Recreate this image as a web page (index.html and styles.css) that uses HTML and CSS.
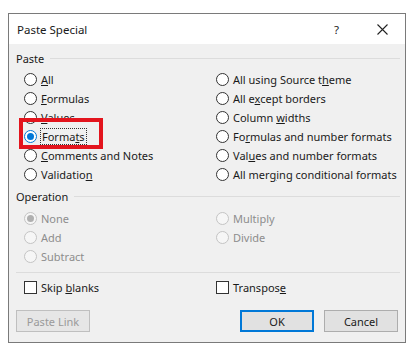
FILE: index.html
```html
<!DOCTYPE html>
<html>
    <head>
        <meta charset="UTF-8">
        <title>Paste Special</title>
        <link rel="stylesheet" href="styles.css">
    </head>
    <body>
        <div class="dialog">
            <!--title bar-->
            <div class="titlebar">
                <span class="title">Paste Special</span>
                <span class="help">?</span>
                <span class="close">
                    <svg width="11" height="11" viewBox="0 0 11 11"><path d="M0.5 0.5 L10.5 10.5 M10.5 0.5 L0.5 10.5" stroke="#222" stroke-width="1.1" fill="none"/></svg>
                </span>
            </div>
            <div class="body">
                <!--paste-->
                <div class="group">
                    <span>Paste</span><div class="rule"></div>
                </div>
                <div class="options">
                    <label class="opt"><span class="radio"></span><span><u>A</u>ll</span></label>
                    <label class="opt"><span class="radio"></span><span>All using Source t<u>h</u>eme</span></label>
                    <label class="opt"><span class="radio"></span><span><u>F</u>ormulas</span></label>
                    <label class="opt"><span class="radio"></span><span>All e<u>x</u>cept borders</span></label>
                    <label class="opt"><span class="radio"></span><span><u>V</u>alues</span></label>
                    <label class="opt"><span class="radio"></span><span>Column <u>w</u>idths</span></label>
                    <label class="opt"><span class="radio on"></span><span class="focus">Forma<u>t</u>s</span></label>
                    <label class="opt"><span class="radio"></span><span>Fo<u>r</u>mulas and number formats</span></label>
                    <label class="opt"><span class="radio"></span><span><u>C</u>omments and Notes</span></label>
                    <label class="opt"><span class="radio"></span><span>Val<u>u</u>es and number formats</span></label>
                    <label class="opt"><span class="radio"></span><span>Validatio<u>n</u></span></label>
                    <label class="opt"><span class="radio"></span><span>All mer<u>g</u>ing conditional formats</span></label>
                </div>
                <!--operation-->
                <div class="group op">
                    <span>Operation</span><div class="rule"></div>
                </div>
                <div class="options off">
                    <label class="opt"><span class="radio on"></span><span>None</span></label>
                    <label class="opt"><span class="radio"></span><span>Multiply</span></label>
                    <label class="opt"><span class="radio"></span><span>Add</span></label>
                    <label class="opt"><span class="radio"></span><span>Divide</span></label>
                    <label class="opt"><span class="radio"></span><span>Subtract</span></label>
                </div>
                <div class="rule full"></div>
                <div class="options checks">
                    <label class="opt"><span class="check"></span><span>Skip <u>b</u>lanks</span></label>
                    <label class="opt"><span class="check"></span><span>Transpos<u>e</u></span></label>
                </div>
                <div class="buttons">
                    <button class="btn disabled">Paste Link</button>
                    <span class="spacer"></span>
                    <button class="btn ok">OK</button>
                    <button class="btn">Cancel</button>
                </div>
            </div>
            <div class="marker"></div>
        </div>
    </body>
</html>
```
FILE: styles.css
```css
body{
    margin: 0;
    background-color: white;
    font-family: 'Noto Sans', 'Open Sans', sans-serif;
    font-size: 11px;
    color: #1a1a1a;
}
.dialog{
    position: relative;
    margin: 13px 0 0 8px;
    width: 396px;
    height: 328px;
    border: 1px solid #7a7a7a;
    background-color: #f0f0f0;
    display: flex;
    flex-direction: column;
}
.titlebar{
    height: 30px;
    background-color: white;
    display: flex;
    align-items: center;
    padding-left: 8px;
    font-size: 11.5px;
}
.title{
    flex: 1;
}
.help{
    width: 14px;
    margin-right: 29px;
}
.close{
    width: 11px;
    height: 11px;
    margin-right: 17px;
    display: flex;
}
.body{
    padding: 6px 5px 0 7px;
}
.group{
    display: flex;
    align-items: center;
    height: 16px;
}
.group span{
    margin-right: 6px;
}
.group.op{
    margin-top: 4px;
}
.rule{
    flex: 1;
    height: 1px;
    background-color: #dcdcdc;
}
.rule.full{
    margin: 6px 0 0 0;
}
.options{
    display: grid;
    grid-template-columns: 192px 1fr;
    padding-left: 8px;
    padding-top: 4px;
}
.options.off{
    padding-top: 5px;
}
.opt{
    height: 19px;
    display: flex;
    align-items: center;
    white-space: nowrap;
    cursor: pointer;
}
.radio{
    width: 11px;
    height: 11px;
    border: 1px solid #333;
    border-radius: 50%;
    background-color: white;
    margin-right: 4px;
    position: relative;
    flex: none;
}
.radio.on{
    border-color: #0078d7;
}
.radio.on::after{
    content: "";
    position: absolute;
    left: 2px;
    top: 2px;
    width: 7px;
    height: 7px;
    border-radius: 50%;
    background-color: #0078d7;
}
.focus{
    outline: 1px dotted #333;
    outline-offset: 0;
    padding: 0 1px;
    line-height: 15px;
}
.off{
    color: #8d8d8d;
}
.off .radio{
    border-color: #c4c4c4;
    background-color: #f6f6f6;
}
.off .radio.on::after{
    background-color: #b0b0b0;
}
.options.checks{
    padding-top: 5px;
}
.check{
    width: 11px;
    height: 11px;
    border: 1px solid #333;
    background-color: white;
    margin-right: 4px;
    flex: none;
}
.buttons{
    display: flex;
    margin-top: 13px;
    padding-right: 2px;
}
.spacer{
    flex: 1;
}
.btn{
    width: 74px;
    height: 22px;
    border: 1px solid #adadad;
    background-color: #e1e1e1;
    font-family: 'Noto Sans', 'Open Sans', sans-serif;
    font-size: 11px;
    color: #1a1a1a;
    padding: 0;
    margin-left: 10px;
}
.btn.disabled{
    margin-left: 0;
    border-color: #bfbfbf;
    background-color: #e6e6e6;
    color: #9a9a9a;
}
.btn.ok{
    border: 2px solid #0078d7;
}
.marker{
    position: absolute;
    left: 10px;
    top: 104px;
    width: 76px;
    height: 23px;
    border: 4px solid #e3141d;
}
```
